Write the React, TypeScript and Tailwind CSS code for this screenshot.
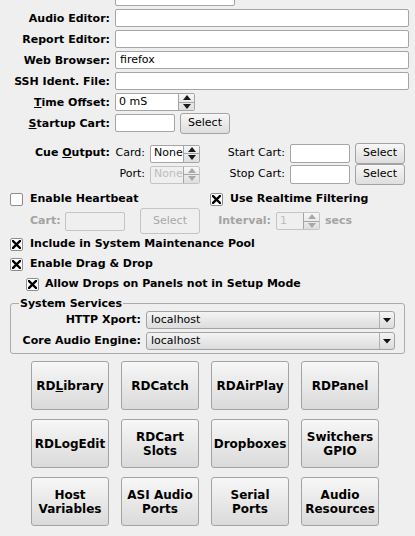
import React from "react";

const font = { fontFamily: '"DejaVu Sans", "Liberation Sans", sans-serif' };

function TextBox({ w, h = 18, value, disabled }: { w: string; h?: number; value?: string; disabled?: boolean }) {
  return (
    <div
      className={`${w} ${h === 19 ? "h-[19px]" : "h-[18px]"} rounded-[2px] border flex items-center px-[4px] text-[11px] ${
        disabled ? "border-[#c4c4c4] bg-[#efefef] text-[#b0b0b0]" : "border-[#a5a5a5] bg-white text-black"
      }`}
    >
      {value}
    </div>
  );
}

function Btn({ w, h, label, disabled }: { w: string; h: string; label: string; disabled?: boolean }) {
  return (
    <div
      className={`${w} ${h} flex items-center justify-center rounded-[3px] border text-[11px] ${
        disabled
          ? "border-[#c4c4c4] bg-[#efefef] text-[#a8a8a8]"
          : "border-[#a3a3a3] bg-gradient-to-b from-[#f7f7f7] to-[#dedede] text-black"
      }`}
    >
      {label}
    </div>
  );
}

function SpinArrows({ disabled }: { disabled?: boolean }) {
  const c = disabled ? "#a8a8a8" : "#1a1a1a";
  return (
    <div className="w-[16px] h-full flex flex-col border-l border-[#a5a5a5] bg-gradient-to-b from-[#f7f7f7] to-[#dedede] rounded-r-[2px]">
      <div className="flex-1 flex items-center justify-center border-b border-[#a5a5a5]">
        <svg width="8" height="5" viewBox="0 0 8 5">
          <path d="M0 5 L4 0 L8 5 Z" fill={c} />
        </svg>
      </div>
      <div className="flex-1 flex items-center justify-center">
        <svg width="8" height="5" viewBox="0 0 8 5">
          <path d="M0 0 L4 5 L8 0 Z" fill={c} />
        </svg>
      </div>
    </div>
  );
}

function Spin({ w, value, disabled }: { w: string; value: string; disabled?: boolean }) {
  return (
    <div
      className={`${w} h-[18px] flex rounded-[2px] border ${
        disabled ? "border-[#c4c4c4] bg-[#efefef]" : "border-[#a5a5a5] bg-white"
      }`}
    >
      <div className={`flex-1 flex items-center pl-[3px] text-[11px] ${disabled ? "text-[#bdbdbd]" : "text-black"}`}>
        {value}
      </div>
      <SpinArrows disabled={disabled} />
    </div>
  );
}

function Check({ checked }: { checked?: boolean }) {
  return (
    <div className="w-[13px] h-[13px] shrink-0 rounded-[2px] border border-[#8e8e8e] bg-white flex items-center justify-center">
      {checked && (
        <svg width="9" height="9" viewBox="0 0 9 9">
          <path d="M1 1 L8 8 M8 1 L1 8" stroke="#000" strokeWidth="2.4" strokeLinecap="square" />
        </svg>
      )}
    </div>
  );
}

function Combo({ value }: { value: string }) {
  return (
    <div className="w-[249px] h-[18px] flex rounded-[3px] border border-[#a3a3a3] bg-gradient-to-b from-[#f4f4f4] to-[#dcdcdc]">
      <div className="flex-1 flex items-center pl-[4px] text-[11px]">{value}</div>
      <div className="w-[15px] flex items-center justify-center border-l border-[#b0b0b0]">
        <svg width="8" height="5" viewBox="0 0 8 5">
          <path d="M0 0 L4 4.5 L8 0 Z" fill="#111" />
        </svg>
      </div>
    </div>
  );
}

function FieldRow({ label, children }: { label: React.ReactNode; children: React.ReactNode }) {
  return (
    <div className="flex h-[18px] items-center">
      <div className="w-[110px] text-right font-bold text-[11px] leading-none">{label}</div>
      <div className="ml-[5px] flex items-center">{children}</div>
    </div>
  );
}

const buttons: React.ReactNode[] = [
  <>
    RD<span className="underline">L</span>ibrary
  </>,
  "RDCatch",
  "RDAirPlay",
  "RDPanel",
  "RDLogEdit",
  <>
    RDCart
    <br />
    Slots
  </>,
  "Dropboxes",
  <>
    Switchers
    <br />
    GPIO
  </>,
  <>
    Host
    <br />
    Variables
  </>,
  <>
    ASI Audio
    <br />
    Ports
  </>,
  <>
    Serial
    <br />
    Ports
  </>,
  <>
    Audio
    <br />
    Resources
  </>,
];

export default function App() {
  return (
    <div className="w-[415px] h-[536px] overflow-hidden bg-[#efefef] text-black text-[11px]" style={font}>
      {/* path / editor fields */}
      <div className="flex flex-col gap-[3px] -mt-[12px]">
        <FieldRow label="">
          <TextBox w="w-[120px]" value="" />
        </FieldRow>
        <FieldRow label="Audio Editor:">
          <TextBox w="w-[294px]" />
        </FieldRow>
        <FieldRow label="Report Editor:">
          <TextBox w="w-[294px]" />
        </FieldRow>
        <FieldRow label="Web Browser:">
          <TextBox w="w-[294px]" value="firefox" />
        </FieldRow>
        <FieldRow label="SSH Ident. File:">
          <TextBox w="w-[294px]" />
        </FieldRow>
        <FieldRow
          label={
            <>
              <span className="underline">T</span>ime Offset:
            </>
          }
        >
          <Spin w="w-[80px]" value="0 mS" />
        </FieldRow>
        <FieldRow
          label={
            <>
              <span className="underline">S</span>tartup Cart:
            </>
          }
        >
          <TextBox w="w-[60px]" />
          <div className="ml-[5px]">
            <Btn w="w-[50px]" h="h-[21px]" label="Select" />
          </div>
        </FieldRow>
      </div>

      {/* cue output */}
      <div className="mt-[11px] flex flex-col">
        <div className="flex h-[21px] items-center">
          <div className="w-[110px] text-right font-bold">
            Cue <span className="underline">O</span>utput:
          </div>
          <div className="w-[35px] text-right">Card:</div>
          <div className="ml-[5px]">
            <Spin w="w-[50px]" value="None" />
          </div>
          <div className="w-[85px] text-right">Start Cart:</div>
          <div className="ml-[5px]">
            <TextBox w="w-[60px]" h={19} />
          </div>
          <div className="ml-[5px]">
            <Btn w="w-[50px]" h="h-[21px]" label="Select" />
          </div>
        </div>
        <div className="flex h-[21px] items-center">
          <div className="w-[145px] text-right">Port:</div>
          <div className="ml-[5px]">
            <Spin w="w-[50px]" value="None" disabled />
          </div>
          <div className="w-[85px] text-right">Stop Cart:</div>
          <div className="ml-[5px]">
            <TextBox w="w-[60px]" h={19} />
          </div>
          <div className="ml-[5px]">
            <Btn w="w-[50px]" h="h-[21px]" label="Select" />
          </div>
        </div>
      </div>

      {/* heartbeat / filtering */}
      <div className="mt-[7px] flex h-[14px] items-center">
        <div className="w-[200px] pl-[10px] flex items-center gap-[7px]">
          <Check />
          <span className="font-bold">Enable Heartbeat</span>
        </div>
        <div className="flex items-center gap-[7px] pl-[10px]">
          <Check checked />
          <span className="font-bold">Use Realtime Filtering</span>
        </div>
      </div>
      <div className="mt-[2px] flex h-[26px] items-center">
        <div className="w-[200px] pl-[30px] flex items-center">
          <span className="font-bold text-[#a3a3a3] w-[30px]">Cart:</span>
          <div className="ml-[5px]">
            <TextBox w="w-[60px]" h={19} disabled />
          </div>
          <div className="ml-[15px]">
            <Btn w="w-[60px]" h="h-[26px]" label="Select" disabled />
          </div>
        </div>
        <div className="flex items-center pl-[10px]">
          <span className="w-[61px] text-right font-bold text-[#a3a3a3]">Interval:</span>
          <div className="ml-[5px]">
            <Spin w="w-[44px]" value="1" disabled />
          </div>
          <span className="ml-[5px] font-bold text-[#a3a3a3]">secs</span>
        </div>
      </div>

      {/* checkboxes */}
      <div className="flex flex-col">
        <div className="h-[20px] pl-[10px] flex items-center gap-[7px]">
          <Check checked />
          <span className="font-bold">Include in System Maintenance Pool</span>
        </div>
        <div className="h-[20px] pl-[10px] flex items-center gap-[7px]">
          <Check checked />
          <span className="font-bold">Enable Drag &amp; Drop</span>
        </div>
        <div className="h-[21px] pl-[26px] flex items-center gap-[6px]">
          <Check checked />
          <span className="font-bold">Allow Drops on Panels not in Setup Mode</span>
        </div>
      </div>

      {/* system services */}
      <fieldset className="mx-[10px] mt-[2px] w-[395px] rounded-[3px] border border-[#ababab] pb-[3px]">
        <legend className="ml-[8px] px-[1px] font-bold leading-[13px]">System Services</legend>
        <div className="flex flex-col gap-[3px] pt-[1px]">
          <div className="flex items-center">
            <div className="w-[130px] text-right font-bold">HTTP Xport:</div>
            <div className="ml-[5px]">
              <Combo value="localhost" />
            </div>
          </div>
          <div className="flex items-center">
            <div className="w-[130px] text-right font-bold">Core Audio Engine:</div>
            <div className="ml-[5px]">
              <Combo value="localhost" />
            </div>
          </div>
        </div>
      </fieldset>

      {/* launcher buttons */}
      <div className="mt-[7px] ml-[31px] grid grid-cols-[78px_78px_78px_78px] gap-x-[12px] gap-y-[9px]">
        {buttons.map((b, i) => (
          <div
            key={i}
            className="h-[49px] flex items-center justify-center text-center rounded-[3px] border border-[#a3a3a3] bg-gradient-to-b from-[#f7f7f7] to-[#dadada] font-bold text-[12px] leading-[14px]"
          >
            <span>{b}</span>
          </div>
        ))}
      </div>
    </div>
  );
}
